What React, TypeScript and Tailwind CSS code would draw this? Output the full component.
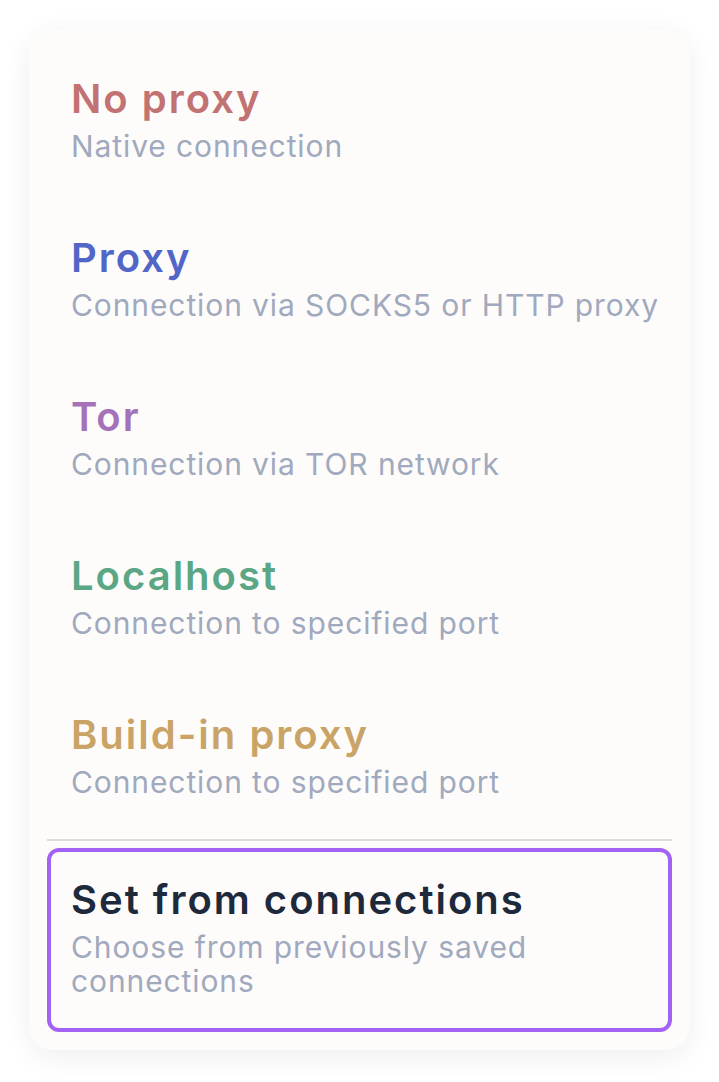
import React, { useState } from 'react';

// Connection mode options
interface Mode {
  id: string;
  title: string;
  description: string;
  titleClass: string;
}

const modes: Mode[] = [
  { id: 'none', title: 'No proxy', description: 'Native connection', titleClass: 'text-[#c27272]' },
  { id: 'proxy', title: 'Proxy', description: 'Connection via SOCKS5 or HTTP proxy', titleClass: 'text-[#5266c8]' },
  { id: 'tor', title: 'Tor', description: 'Connection via TOR network', titleClass: 'text-[#a472b8]' },
  { id: 'localhost', title: 'Localhost', description: 'Connection to specified port', titleClass: 'text-[#5ba685]' },
  { id: 'builtin', title: 'Build-in proxy', description: 'Connection to specified port', titleClass: 'text-[#c9a466]' },
];

function ModeItem({ title, description, titleClass, selected, onClick }) {
  return (
    <button
      onClick={onClick}
      className={`w-full text-left rounded-[12px] border-4 pl-5 pr-1 pt-[26px] pb-[30px] ${
        selected ? 'border-[#a262f3]' : 'border-transparent'
      }`}
    >
      <div className={`text-[40px] leading-[44px] font-semibold tracking-[2px] ${titleClass}`}>{title}</div>
      <div className="mt-2 text-[30px] leading-[34px] text-[#a0a9bd] tracking-[0.9px]">{description}</div>
    </button>
  );
}

export default function App() {
  const [selected, setSelected] = useState('saved');

  return (
    <div className="min-h-screen bg-white p-[29px]" style={{ fontFamily: 'Inter, "Noto Sans", sans-serif' }}>
      <div className="bg-[#fdfcfb] rounded-[24px] shadow-[0_6px_28px_rgba(0,0,0,0.07)] p-[18px]">
        <div className="flex flex-col gap-[9px]">
          {modes.map(m => (
            <ModeItem
              key={m.id}
              title={m.title}
              description={m.description}
              titleClass={m.titleClass}
              selected={selected === m.id}
              onClick={() => setSelected(m.id)}
            />
          ))}
        </div>
        <div className="h-[2px] bg-[#dedddb] mt-[6px] mb-[7px]" />
        <ModeItem
          title="Set from connections"
          description="Choose from previously saved connections"
          titleClass="text-[#1e293b]"
          selected={selected === 'saved'}
          onClick={() => setSelected('saved')}
        />
      </div>
    </div>
  );
}
